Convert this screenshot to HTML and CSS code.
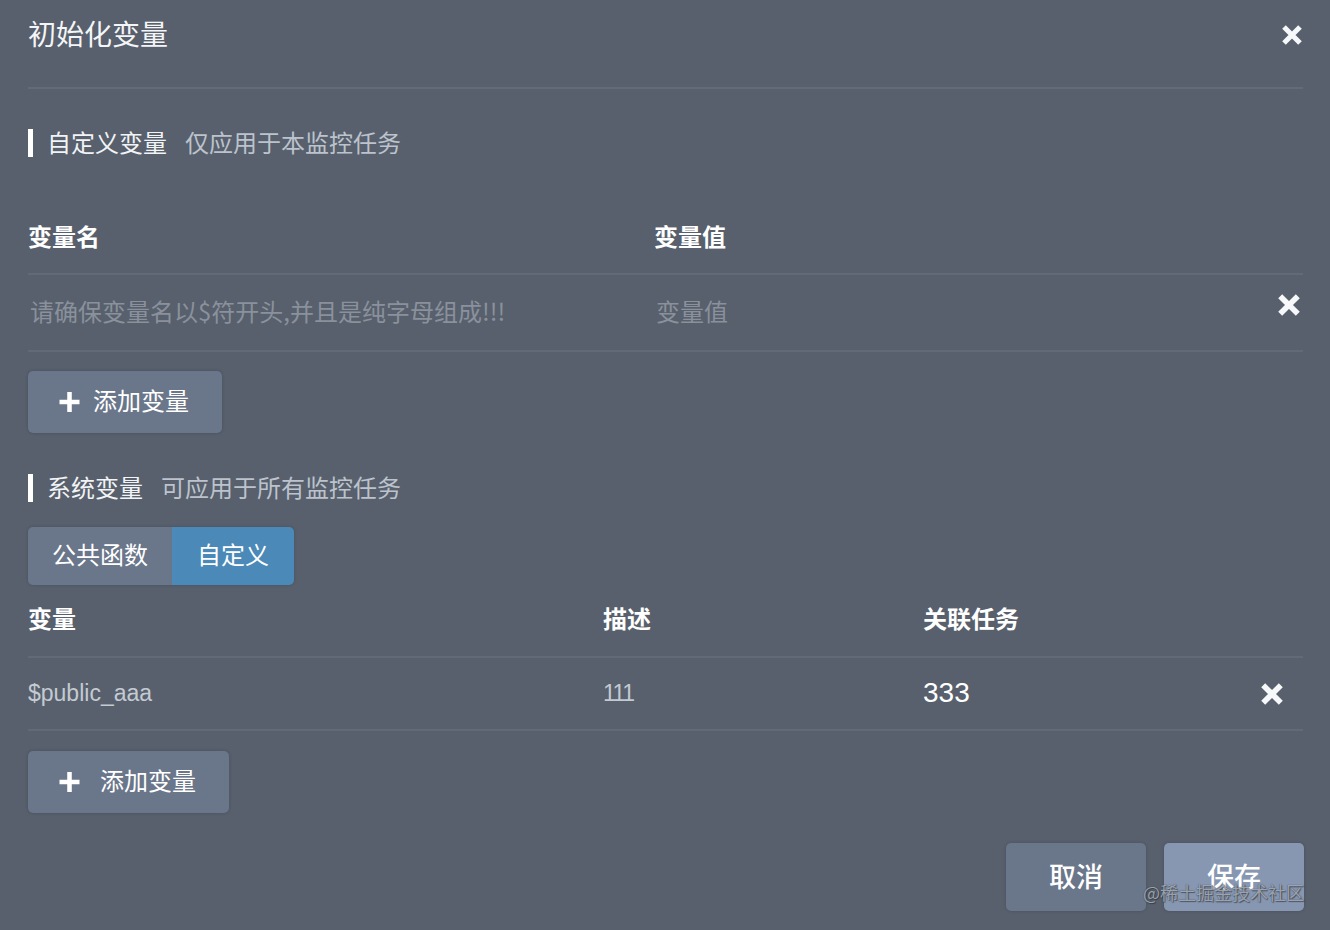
FILE: index.html
```html
<!DOCTYPE html>
<html lang="zh-CN">
<head>
<meta charset="utf-8">
<title>初始化变量</title>
<link rel="stylesheet" href="styles.css">
</head>
<body>
<div class="dialog">
  <header class="dlg-head">
    <h1 class="dlg-title">初始化变量</h1>
    <button class="icon-btn close-btn" aria-label="关闭">
      <svg class="x-icon x-sm" viewBox="0 0 22 22"><path d="M2.2 2.2 L19.8 19.8 M19.8 2.2 L2.2 19.8"/></svg>
    </button>
  </header>

  <section class="sec">
    <div class="sec-title"><span class="sec-name">自定义变量</span><span class="sec-desc">仅应用于本监控任务</span></div>
    <div class="tbl tbl-custom">
      <div class="tr th">
        <div class="cell">变量名</div>
        <div class="cell">变量值</div>
        <div class="cell"></div>
      </div>
      <div class="tr td">
        <input class="inp" type="text" placeholder="请确保变量名以$符开头,并且是纯字母组成!!!">
        <input class="inp" type="text" placeholder="变量值">
        <button class="icon-btn del-btn" aria-label="删除">
          <svg class="x-icon" viewBox="0 0 22 22"><path d="M2.2 2.2 L19.8 19.8 M19.8 2.2 L2.2 19.8"/></svg>
        </button>
      </div>
    </div>
    <button class="btn-add">
      <svg class="plus-icon" viewBox="0 0 22 22"><path d="M8.5 0h5v8.5H22v5h-8.5V22h-5v-8.5H0v-5h8.5z"/></svg>
      <span>添加变量</span>
    </button>
  </section>

  <section class="sec sec-sys">
    <div class="sec-title"><span class="sec-name">系统变量</span><span class="sec-desc">可应用于所有监控任务</span></div>
    <div class="tabs">
      <button class="tab">公共函数</button>
      <button class="tab tab-active">自定义</button>
    </div>
    <div class="tbl tbl-sys">
      <div class="tr th">
        <div class="cell">变量</div>
        <div class="cell">描述</div>
        <div class="cell">关联任务</div>
        <div class="cell"></div>
      </div>
      <div class="tr td">
        <div class="cell val-name">$public_aaa</div>
        <div class="cell val-desc">111</div>
        <div class="cell val-task">333</div>
        <button class="icon-btn del-btn" aria-label="删除">
          <svg class="x-icon" viewBox="0 0 22 22"><path d="M2.2 2.2 L19.8 19.8 M19.8 2.2 L2.2 19.8"/></svg>
        </button>
      </div>
    </div>
    <button class="btn-add btn-add-wide">
      <svg class="plus-icon" viewBox="0 0 22 22"><path d="M8.5 0h5v8.5H22v5h-8.5V22h-5v-8.5H0v-5h8.5z"/></svg>
      <span>添加变量</span>
    </button>
  </section>

  <footer class="dlg-foot">
    <button class="btn-foot btn-cancel">取消</button>
    <button class="btn-foot btn-save">保存</button>
  </footer>

  <div class="watermark">@稀土掘金技术社区</div>
</div>
</body>
</html>
```

FILE: styles.css
```css
* { box-sizing: border-box; }

html, body {
  margin: 0;
  padding: 0;
  background: #57606c;
}

body {
  font-family: "Liberation Sans", "Noto Sans CJK SC", sans-serif;
  color: #ffffff;
}

button, input {
  font-family: inherit;
}

.dialog {
  position: relative;
  height: 930px;
  padding: 0 27px 0 28px;
  overflow: hidden;
}

/* header */
.dlg-head {
  display: flex;
  justify-content: space-between;
  align-items: flex-start;
  height: 89px;
  padding-top: 12px;
  border-bottom: 2px solid #626b77;
}

.dlg-title {
  margin: 0;
  font-size: 28px;
  line-height: 42px;
  font-weight: 400;
  color: #f4f5f7;
  font-family: "Noto Sans CJK SC", sans-serif;
}

.icon-btn {
  background: none;
  border: 0;
  padding: 0;
  margin: 0;
  display: flex;
  align-items: center;
  justify-content: center;
  cursor: pointer;
}

.close-btn {
  margin-top: 13px;
  margin-right: 1px;
}

.x-icon {
  width: 22px;
  height: 22px;
  display: block;
}

.x-icon path {
  fill: none;
  stroke: #f7f8fa;
  stroke-width: 5.6;
  stroke-linecap: butt;
}

.x-sm {
  width: 20px;
  height: 20px;
}

/* sections */
.sec-title {
  display: flex;
  align-items: center;
  height: 28px;
  margin-top: 40px;
  border-left: 5px solid #ffffff;
  padding-left: 14px;
  padding-bottom: 2px;
  font-family: "Noto Sans CJK SC", sans-serif;
  font-size: 24px;
  line-height: 28px;
}

.sec-name {
  color: #f1f3f5;
}

.sec-desc {
  margin-left: 18px;
  color: #bcc3cc;
}

.sec-sys .sec-title {
  margin-top: 41px;
}

/* tables */
.tbl {
  display: flex;
  flex-direction: column;
}

.tr {
  display: grid;
  align-items: center;
  border-bottom: 2px solid #616a76;
}

.tbl-custom .tr {
  grid-template-columns: 626px 1fr 22px;
  padding-right: 3px;
}

.tbl-custom .th {
  margin-top: 44px;
  height: 74px;
  padding-bottom: 4px;
}

.tbl-custom .td {
  height: 77px;
  padding-bottom: 16px;
}

.th .cell {
  font-family: "Noto Sans CJK SC", sans-serif;
  font-size: 24px;
  font-weight: 700;
  color: #ffffff;
}

.inp {
  display: block;
  width: 100%;
  background: transparent;
  border: 0;
  outline: none;
  padding: 0 1px 4px 2px;
  margin: 0;
  height: 40px;
  font-size: 24px;
  color: #e8ebef;
  font-family: "Noto Sans CJK SC", sans-serif;
}

.tbl-custom .td .inp {
  margin-top: 16px;
}

.inp::placeholder {
  color: #8a919c;
  opacity: 1;
}

.tbl-sys .tr {
  grid-template-columns: 575px 320px 1fr 22px;
  padding-right: 20px;
}

.tbl-sys .th {
  height: 73px;
  padding-bottom: 6px;
}

.tbl-sys .td {
  height: 73px;
}

.val-name {
  font-size: 23px;
  color: #c4cad2;
}

.val-desc {
  font-size: 23px;
  color: #c4cad2;
  letter-spacing: -1.5px;
}

.val-task {
  font-size: 28px;
  color: #ffffff;
  margin-bottom: 2px;
}

/* add button */
.btn-add {
  display: inline-flex;
  align-items: center;
  gap: 13px;
  height: 62px;
  margin-top: 19px;
  padding: 0 33px 0 31px;
  background: #6a768a;
  border: 0;
  border-radius: 5px;
  box-shadow: 0 0 3px rgba(40, 46, 56, 0.35);
  color: #ffffff;
  font-family: "Noto Sans CJK SC", sans-serif;
  font-size: 24px;
  cursor: pointer;
}

.btn-add span {
  padding-bottom: 5px;
}

.btn-add-wide {
  gap: 20px;
  margin-top: 20px;
}

.plus-icon {
  width: 21px;
  height: 20px;
  display: block;
}

.plus-icon path {
  fill: #ffffff;
}

/* tabs */
.tabs {
  display: inline-flex;
  margin-top: 25px;
  height: 58px;
  border-radius: 5px;
  overflow: hidden;
  box-shadow: 0 0 3px rgba(40, 46, 56, 0.3);
}

.tab {
  border: 0;
  margin: 0;
  padding: 0 24px 5px;
  height: 58px;
  background: #6a768a;
  color: #ffffff;
  font-family: "Noto Sans CJK SC", sans-serif;
  font-size: 24px;
  cursor: pointer;
}

.tab-active {
  background: #4a89b8;
  padding: 0 25px 5px;
}

.tbl-sys {
  display: flex;
}

/* footer */
.dlg-foot {
  display: flex;
  justify-content: flex-end;
  gap: 18px;
  margin-top: 30px;
  margin-right: -1px;
}

.btn-foot {
  width: 140px;
  height: 68px;
  border: 0;
  border-radius: 5px;
  padding: 0 0 4px;
  color: #ffffff;
  font-family: "Noto Sans CJK SC", sans-serif;
  font-size: 27px;
  font-weight: 500;
  box-shadow: 0 0 3px rgba(40, 46, 56, 0.3);
  cursor: pointer;
}

.btn-cancel {
  background: #6a768a;
}

.btn-save {
  background: #8797b2;
}

.watermark {
  position: absolute;
  right: 26px;
  bottom: 26px;
  font-family: "Noto Sans CJK SC", sans-serif;
  font-size: 18px;
  line-height: 24px;
  color: rgba(190, 196, 206, 0.75);
  text-shadow: 0 0 1px rgba(40, 46, 56, 0.9), 1px 1px 1px rgba(40, 46, 56, 0.6);
  pointer-events: none;
}
```
